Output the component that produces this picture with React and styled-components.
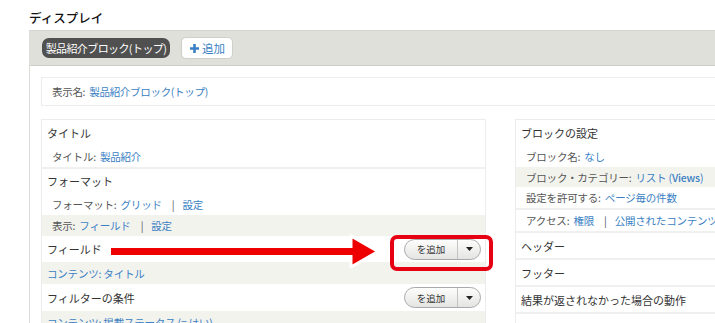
import React from "react";
import styled, { createGlobalStyle } from "styled-components";

const GlobalStyle = createGlobalStyle`
  html, body {
    margin: 0;
    padding: 0;
    background: #ffffff;
    overflow: hidden;
  }
  body {
    font-family: "Noto Sans CJK JP", "Noto Sans", sans-serif;
    color: #333333;
  }
`;

const Page = styled.div`
  position: relative;
  width: 715px;
  height: 323px;
  overflow: hidden;
  padding: 9px 0 0 29px;
  box-sizing: border-box;
`;

const PageTitle = styled.h2`
  margin: 0 0 4px 0;
  font-size: 12.5px;
  line-height: 17px;
  font-weight: 500;
  color: #111111;
`;

const Panel = styled.div`
  width: 960px;
  border-left: 1px solid #dcdcd8;
`;

const TabBar = styled.div`
  display: flex;
  align-items: center;
  gap: 11px;
  height: 34px;
  padding-left: 12px;
  background: #e0e0db;
  border-top: 1px solid #d4d4cf;
  border-bottom: 1px solid #cfcfca;
`;

const ActiveTab = styled.div`
  width: 128px;
  height: 20px;
  box-sizing: border-box;
  display: flex;
  align-items: center;
  justify-content: center;
  background: #505050;
  color: #ffffff;
  border-radius: 7px;
  font-size: 11px;
  letter-spacing: -0.6px;
  white-space: nowrap;
`;

const AddTab = styled.div`
  height: 20px;
  padding: 0 7px 0 8px;
  display: flex;
  align-items: center;
  gap: 3px;
  background: #ffffff;
  border: 1px solid #cfcfca;
  border-radius: 5px;
  color: #3b7fc4;
  font-size: 11.5px;
`;

const Body = styled.div`
  padding: 11px 0 0 11px;
`;

const NameBox = styled.div`
  height: 27px;
  display: flex;
  align-items: center;
  padding-left: 10px;
  border: 1px solid #ececec;
  font-size: 10.5px;
  letter-spacing: -0.3px;
  color: #555555;
`;

const Link = styled.a`
  color: #3b7fc4;
  text-decoration: none;
  margin-left: ${(p) => (p.$tight ? "0" : "4px")};
  font-weight: ${(p) => (p.$bold ? 500 : 400)};
`;

const Columns = styled.div`
  display: grid;
  grid-template-columns: 445px 445px;
  column-gap: 29px;
  margin-top: 13px;
  align-items: start;
`;

const Column = styled.div`
  border: 1px solid #ececec;
  border-bottom: none;
`;

const Section = styled.div`
  border-top: ${(p) => (p.$first ? "none" : "2px solid #f0f0ee")};
`;

const Heading = styled.div`
  height: ${(p) => p.$h || 25}px;
  display: flex;
  align-items: center;
  justify-content: space-between;
  padding: 0 4px 0 5px;
  font-size: 11px;
  color: #333333;
  white-space: nowrap;
`;

const Item = styled.div`
  height: ${(p) => p.$h || 22}px;
  display: flex;
  align-items: center;
  padding-left: ${(p) => (p.$flush ? 5 : 10)}px;
  background: ${(p) => (p.$alt ? "#f3f3ee" : "#ffffff")};
  font-size: 10.5px;
  letter-spacing: -0.2px;
  color: #555555;
  white-space: nowrap;
  overflow: hidden;
`;

const Pipe = styled.span`
  margin: 0 8px 0 10px;
  color: #555555;
`;

const SplitButton = styled.div`
  display: flex;
  height: 19px;
  border: 1px solid #a9a9a9;
  border-radius: 11px;
  background: linear-gradient(#fdfdfd, #e4e4e2);
  overflow: hidden;
`;

const SplitMain = styled.span`
  width: 52px;
  display: flex;
  align-items: center;
  justify-content: center;
  font-size: 9.5px;
  color: #333333;
  border-right: 1px solid #c4c4c4;
`;

const SplitCaret = styled.span`
  width: 22px;
  display: flex;
  align-items: center;
  justify-content: center;
`;

const Highlight = styled.div`
  position: absolute;
  left: 390px;
  top: 235px;
  width: 103px;
  height: 36px;
  box-sizing: border-box;
  border: 4px solid #e60012;
  border-radius: 7px;
`;

const Arrow = styled.svg`
  position: absolute;
  left: 105px;
  top: 232px;
`;

const Caret = () => (
  <svg width="7" height="4" viewBox="0 0 7 4">
    <path d="M0 0 H7 L3.5 4 Z" fill="#222" />
  </svg>
);

const AddButton = () => (
  <SplitButton>
    <SplitMain>を追加</SplitMain>
    <SplitCaret>
      <Caret />
    </SplitCaret>
  </SplitButton>
);

export default function App() {
  return (
    <>
      <GlobalStyle />
      <Page>
        <PageTitle>ディスプレイ</PageTitle>
        <Panel>
          <TabBar>
            <ActiveTab>製品紹介ブロック(トップ)</ActiveTab>
            <AddTab>
              <svg width="9" height="9" viewBox="0 0 9 9">
                <path d="M3.2 0 H5.8 V3.2 H9 V5.8 H5.8 V9 H3.2 V5.8 H0 V3.2 H3.2 Z" fill="#3b7fc4" />
              </svg>
              追加
            </AddTab>
          </TabBar>
          <Body>
            <NameBox>
              表示名:<Link href="#">製品紹介ブロック(トップ)</Link>
            </NameBox>
            <Columns>
              <Column>
                <Section $first>
                  <Heading $h={25}>タイトル</Heading>
                  <Item>
                    タイトル:<Link href="#">製品紹介</Link>
                  </Item>
                </Section>
                <Section>
                  <Heading $h={24}>フォーマット</Heading>
                  <Item>
                    フォーマット:<Link href="#">グリッド</Link>
                    <Pipe>|</Pipe>
                    <Link href="#" $tight>設定</Link>
                  </Item>
                  <Item $alt $h={21}>
                    表示:<Link href="#">フィールド</Link>
                    <Pipe>|</Pipe>
                    <Link href="#" $tight>設定</Link>
                  </Item>
                </Section>
                <Heading $h={26}>
                  フィールド
                  <AddButton />
                </Heading>
                <Item $alt $flush>
                  <Link href="#" $tight>コンテンツ: タイトル</Link>
                </Item>
                <Heading $h={27}>
                  フィルターの条件
                  <AddButton />
                </Heading>
                <Item $alt $flush>
                  <Link href="#" $tight>コンテンツ: 掲載ステータス (= はい)</Link>
                </Item>
              </Column>
              <Column>
                <Section $first>
                  <Heading $h={25}>ブロックの設定</Heading>
                  <Item>
                    ブロック名:<Link href="#">なし</Link>
                  </Item>
                  <Item $alt $h={20}>
                    ブロック・カテゴリー:<Link href="#">リスト (<Link href="#" $tight $bold>Views</Link>)</Link>
                  </Item>
                  <Item $h={21}>
                    設定を許可する:<Link href="#">ページ毎の件数</Link>
                  </Item>
                </Section>
                <Section>
                  <Item $h={21}>
                    アクセス:<Link href="#">権限</Link>
                    <Pipe>|</Pipe>
                    <Link href="#" $tight>公開されたコンテンツを閲覧</Link>
                  </Item>
                </Section>
                <Section>
                  <Heading $h={25}>ヘッダー</Heading>
                </Section>
                <Section>
                  <Heading $h={25}>フッター</Heading>
                </Section>
                <Section>
                  <Heading $h={25}>結果が返されなかった場合の動作</Heading>
                </Section>
                <Section>
                  <Heading $h={25}>ページャー</Heading>
                </Section>
              </Column>
            </Columns>
          </Body>
        </Panel>
        <Arrow width="280" height="40" viewBox="0 0 280 40">
          <rect x="6" y="16" width="244" height="7" fill="#ee0000" />
          <path
            d="M246 4 L273 19.5 L246 35 Z"
            fill="#ee0000"
            stroke="#ffffff"
            strokeWidth="3"
            strokeLinejoin="round"
          />
          <rect x="240" y="16" width="8" height="7" fill="#ee0000" />
        </Arrow>
        <Highlight />
      </Page>
    </>
  );
}
